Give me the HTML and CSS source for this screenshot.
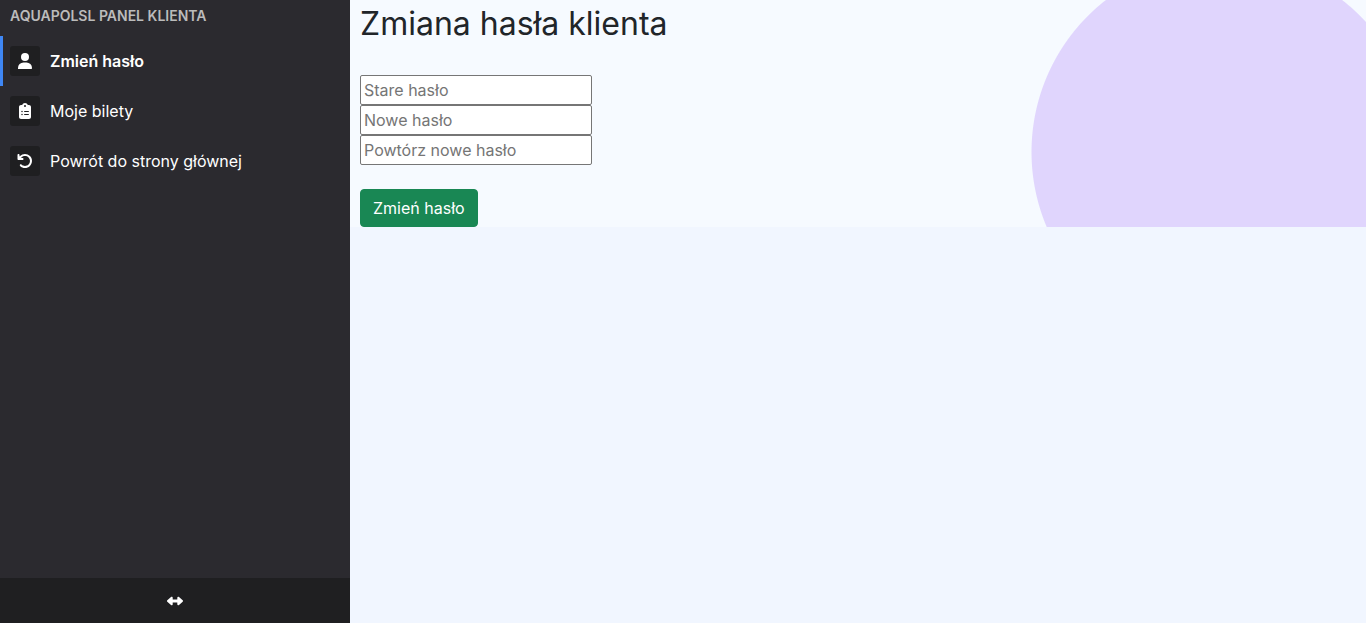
FILE: index.html
```html
<!DOCTYPE html>
<html lang="pl">
<head>
<meta charset="utf-8">
<meta name="viewport" content="width=device-width, initial-scale=1">
<title>AQUAPOLSL Panel klienta</title>
<link rel="stylesheet" href="styles.css">
</head>
<body class="page">
<aside class="sidebar">
  <div class="sidebar-title">AQUAPOLSL PANEL KLIENTA</div>
  <nav class="menu">
    <a class="menu-item active" href="#">
      <span class="menu-icon"><svg width="16" height="16" viewBox="0 0 16 16" fill="currentColor" aria-hidden="true"><circle cx="8" cy="4" r="4"/><path d="M1 16v-1a5.500 5.500 0 0 1 5.500-5.500h3A5.500 5.500 0 0 1 15 15v.3a.7.7 0 0 1-.7.7z"/></svg></span>
      <span>Zmień hasło</span>
    </a>
    <a class="menu-item" href="#">
      <span class="menu-icon"><svg width="16" height="16" viewBox="0 0 384 512" fill="currentColor" aria-hidden="true"><path d="M192 0c-41.800 0-77.400 26.700-90.500 64H64C28.700 64 0 92.700 0 128v320c0 35.300 28.700 64 64 64h256c35.300 0 64-28.700 64-64V128c0-35.300-28.700-64-64-64h-37.500C269.400 26.700 233.800 0 192 0zm0 64a32 32 0 1 1 0 64 32 32 0 1 1 0-64zM72 272a24 24 0 1 1 48 0 24 24 0 1 1-48 0zm104-16h128c8.800 0 16 7.200 16 16s-7.200 16-16 16H176c-8.800 0-16-7.200-16-16s7.200-16 16-16zM72 368a24 24 0 1 1 48 0 24 24 0 1 1-48 0zm88 0c0-8.800 7.200-16 16-16h128c8.800 0 16 7.200 16 16s-7.200 16-16 16H176c-8.800 0-16-7.200-16-16z"/></svg></span>
      <span>Moje bilety</span>
    </a>
    <a class="menu-item" href="#">
      <span class="menu-icon"><svg width="16" height="16" viewBox="0 0 512 512" fill="currentColor" aria-hidden="true"><path d="M125.700 160H176c17.700 0 32 14.300 32 32s-14.300 32-32 32H48c-17.700 0-32-14.300-32-32V64c0-17.700 14.300-32 32-32s32 14.300 32 32v51.200L97.600 97.600c87.500-87.500 229.300-87.500 316.800 0s87.500 229.300 0 316.800-229.300 87.500-316.800 0c-12.500-12.500-12.500-32.800 0-45.300s32.800-12.500 45.300 0c62.500 62.500 163.800 62.500 226.300 0s62.500-163.800 0-226.300-163.800-62.500-226.300 0L125.700 160z"/></svg></span>
      <span>Powrót do strony głównej</span>
    </a>
  </nav>
  <button class="toggle" type="button" aria-label="Zwiń menu">
    <svg width="16" height="16" viewBox="0 0 16 16" fill="currentColor" aria-hidden="true"><path d="M.3 7.300 4 4.100c.8-.6 1.700-.2 1.700.7v1.700h4.600V4.800c0-.9.900-1.300 1.700-.7l3.700 3.200c.4.400.4 1 0 1.400L12 11.900c-.8.600-1.700.2-1.700-.7V9.500H5.700v1.700c0 .9-.9 1.300-1.700.7L.3 8.700a1 1 0 0 1 0-1.400z"/></svg>
  </button>
</aside>
<main class="content">
  <section class="panel">
    <h1 class="heading">Zmiana hasła klienta</h1>
    <form class="form">
      <input class="field" type="password" placeholder="Stare hasło" aria-label="Stare hasło">
      <input class="field" type="password" placeholder="Nowe hasło" aria-label="Nowe hasło">
      <input class="field" type="password" placeholder="Powtórz nowe hasło" aria-label="Powtórz nowe hasło">
      <button class="submit" type="submit">Zmień hasło</button>
    </form>
  </section>
</main>
</body>
</html>
```
FILE: styles.css
```css
* {
  box-sizing: border-box;
}

.page {
  display: flex;
  min-height: 100vh;
  margin: 0;
  background: #f1f6ff;
  color: #212529;
  font: 16px/24px Inter, "Liberation Sans", sans-serif;
}

.sidebar {
  display: flex;
  flex: 0 0 350px;
  flex-direction: column;
  background: #2b2a2f;
  color: #fff;
}

.sidebar-title {
  padding: 5px 10px 10px;
  color: #bbb;
  font-size: 14px;
  font-weight: 600;
  line-height: 21px;
}

.menu {
  flex: 1;
}

.menu-item {
  display: flex;
  align-items: center;
  gap: 10px;
  padding: 10px;
  color: #fff;
  line-height: 30px;
  text-decoration: none;
}

.active {
  font-weight: 600;
  box-shadow: inset 3px 0 #3f87f5;
}

.menu-icon {
  display: grid;
  flex: none;
  place-items: center;
  width: 30px;
  height: 30px;
  border-radius: 3px;
  background: #1f1f21;
}

.toggle {
  display: grid;
  place-items: center;
  height: 45px;
  border: 0;
  background: #1f1f21;
  color: #fff;
}

.content {
  flex: 1;
  min-width: 0;
}

.panel {
  padding: 5px 10px 0;
  background: radial-gradient(circle at right 142px top 152px, #e0d5fd 192px, transparent 193px) #f6faff;
}

.heading {
  margin: 0 0 32px;
  font-size: 32px;
  font-weight: 400;
  line-height: 38px;
}

.form {
  display: flex;
  flex-direction: column;
  align-items: flex-start;
}

.field {
  width: 232px;
  max-width: 100%;
  height: 30px;
  padding: 1px 3px;
  border: 1px solid #767676;
  border-radius: 2px;
  background: #fff;
  font: inherit;
}

.field::placeholder {
  color: #757575;
}

.submit {
  margin-top: 24px;
  padding: 6px 12px;
  border: 1px solid #198754;
  border-radius: 4px;
  background: #198754;
  color: #fff;
  font: inherit;
}
```
